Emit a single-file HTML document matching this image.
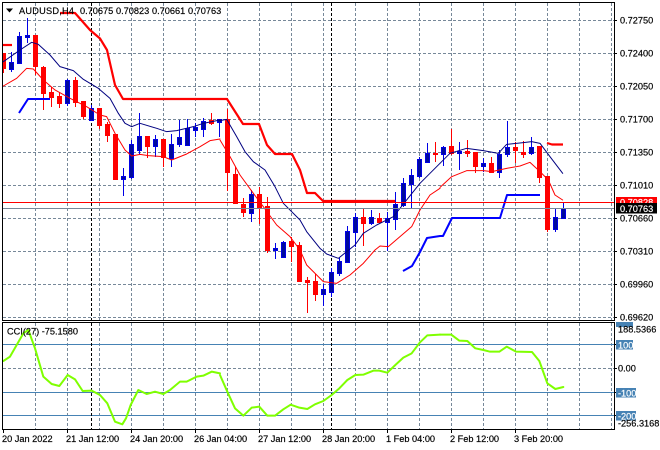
<!DOCTYPE html>
<html><head><meta charset="utf-8"><title>AUDUSD,H4</title>
<style>
html,body{margin:0;padding:0;background:#fff;width:660px;height:450px;overflow:hidden}
svg{display:block}
text{font-family:"Liberation Sans",sans-serif;font-size:9.2px;fill:#000;stroke:#000;stroke-width:.18}
text.w{fill:#fff;stroke:#fff}
.g{stroke:#778899;stroke-width:1;stroke-dasharray:3 2;fill:none;shape-rendering:crispEdges}
.k{stroke:#000;stroke-width:1;fill:none;shape-rendering:crispEdges}
.c{shape-rendering:crispEdges}
.z{fill:none;stroke-linejoin:round;stroke-linecap:round}
</style></head><body>
<svg width="660" height="450" viewBox="0 0 660 450" xmlns="http://www.w3.org/2000/svg">
<rect width="660" height="450" fill="#fff"/>
<!-- grid main -->
<path class="g" d="M3 20.5H614M3 53.5H614M3 86.5H614M3 119.5H614M3 152.5H614M3 185.5H614M3 218.5H614M3 251.5H614M3 284.5H614M3 317.5H614"/>
<path class="g" d="M35.5 3V320M67.5 3V320M99.5 3V320M131.5 3V320M163.5 3V320M195.5 3V320M227.5 3V320M259.5 3V320M291.5 3V320M323.5 3V320M355.5 3V320M387.5 3V320M419.5 3V320M451.5 3V320M483.5 3V320M515.5 3V320M547.5 3V320M579.5 3V320M611.5 3V320"/>
<!-- grid sub -->
<path class="g" d="M35.5 323V429M67.5 323V429M99.5 323V429M131.5 323V429M163.5 323V429M195.5 323V429M227.5 323V429M259.5 323V429M291.5 323V429M323.5 323V429M355.5 323V429M387.5 323V429M419.5 323V429M451.5 323V429M483.5 323V429M515.5 323V429M547.5 323V429M579.5 323V429M611.5 323V429M3 368.5H614"/>
<path d="M3 344.5H614M3 392.5H614M3 415.5H614" stroke="#4682b4" stroke-width="1" class="c"/>
<!-- period separators -->
<path d="M91.5 3V429M331.5 3V429" stroke="#000" stroke-width="1" stroke-dasharray="3 2" class="c"/>
<!-- wicks -->
<path class="c" stroke="#ff0000" stroke-width="1" fill="none" d="M3.5 53V73M35.5 35V75M43.5 66V110M51.5 87V107M59.5 92V108M75.5 77V107M83.5 101V119M99.5 108V129M107.5 122V142M115.5 134V179M147.5 136V158M163.5 139V167M211.5 113V125M227.5 109V191M235.5 167V204M243.5 198V217M259.5 187V224M267.5 197V253M291.5 237V262M299.5 242V282M307.5 277V313M315.5 274V301M363.5 208V246M379.5 213V223M435.5 142V162M451.5 129V155M467.5 140V157M475.5 152V173M491.5 157V173M515.5 142V163M523.5 141V158M539.5 146V183M547.5 176V232"/>
<path class="c" stroke="#0000e6" stroke-width="1" fill="none" d="M11.5 52V72M19.5 32V63M27.5 18V43M67.5 79V106M91.5 105V120M123.5 168V196M131.5 140V179M139.5 113V155M155.5 135V157M171.5 134V167M179.5 120V147M187.5 119V146M195.5 123V137M203.5 118V137M219.5 119V137M251.5 190V222M275.5 243V259M283.5 241V257M323.5 284V306M331.5 268V297M339.5 258V276M347.5 226V263M355.5 213V247M371.5 210V225M387.5 212V251M395.5 192V230M403.5 178V207M411.5 169V208M419.5 157V178M427.5 143V163M443.5 146V166M459.5 142V170M483.5 158V172M499.5 150V178M507.5 121V157M531.5 137V155M555.5 208V232M563.5 203V218"/>
<!-- red bodies -->
<path class="c" fill="#ff0000" d="M3 53h3v16h-3zM33 35h5v32h-5zM41 67h5v27h-5zM49 92h5v6h-5zM57 96h5v8h-5zM73 80h5v23h-5zM81 101h5v16h-5zM97 108h5v18h-5zM105 124h5v12h-5zM113 134h5v46h-5zM145 136h5v11h-5zM161 139h5v19h-5zM209 120h5v4h-5zM225 119h5v54h-5zM233 174h5v30h-5zM241 204h5v9h-5zM257 194h5v14h-5zM265 206h5v45h-5zM289 241h5v6h-5zM297 245h5v37h-5zM305 280h5v3h-5zM313 281h5v14h-5zM361 217h5v7h-5zM377 218h5v5h-5zM433 153h5v2h-5zM449 146h5v8h-5zM465 151h5v3h-5zM473 152h5v15h-5zM489 163h5v10h-5zM513 147h5v4h-5zM521 152h5v3h-5zM537 146h5v32h-5zM545 176h5v54h-5z"/>
<!-- blue bodies -->
<path class="c" fill="#000a9c" stroke="#0000e6" stroke-width="1" d="M9.5 62.5h4v7h-4zM17.5 36.5h4v27h-4zM25.5 35.5h4v2h-4zM65.5 80.5h4v23h-4zM89.5 108.5h4v12h-4zM121.5 176.5h4v3h-4zM129.5 144.5h4v33h-4zM137.5 136.5h4v14h-4zM153.5 139.5h4v7h-4zM169.5 144.5h4v14h-4zM177.5 137.5h4v7h-4zM185.5 128.5h4v17h-4zM193.5 127.5h4v3h-4zM201.5 121.5h4v8h-4zM217.5 119.5h4v3h-4zM249.5 194.5h4v19h-4zM273.5 248.5h4v2h-4zM281.5 242.5h4v15h-4zM321.5 289.5h4v5h-4zM329.5 272.5h4v20h-4zM337.5 261.5h4v12h-4zM345.5 231.5h4v31h-4zM353.5 217.5h4v15h-4zM369.5 217.5h4v6h-4zM385.5 218.5h4v4h-4zM393.5 204.5h4v15h-4zM401.5 183.5h4v22h-4zM409.5 175.5h4v9h-4zM417.5 159.5h4v17h-4zM425.5 153.5h4v9h-4zM441.5 147.5h4v7h-4zM457.5 151.5h4v2h-4zM481.5 163.5h4v3h-4zM497.5 154.5h4v18h-4zM505.5 147.5h4v7h-4zM529.5 147.5h4v6h-4zM553.5 217.5h4v12h-4zM561.5 208.5h4v10h-4z"/>
<!-- thin navy MA -->
<g class="z" stroke="#000080" stroke-width="3">
<polyline transform="scale(.33333)" points="10,185 60,150 95,127 115,133 150,165 180,200 220,212 250,238 295,265 330,295 355,340 375,370 395,380 420,370 470,385 500,395 530,392 580,380 610,370 660,360"/>
<polyline transform="translate(220 100) scale(.33333)" points="0,62 20,58 50,110 75,155 100,185 135,210 165,260 190,310 240,360 260,395 300,445 320,462 355,475 405,435 430,400 470,375 520,350 560,300 600,250 660,190"/>
<polyline transform="translate(440 100) scale(.33333)" points="0,190 30,160 80,145 130,152 175,160 200,133 250,128 275,125 300,130 330,170 368,220"/>
</g>
<!-- thin red MA -->
<g class="z" stroke="#ff0000" stroke-width="3">
<polyline transform="scale(.33333)" points="10,258 50,235 80,205 100,207 130,240 165,270 210,295 260,320 300,345 320,350 345,400 375,450 395,468 420,463 445,467 490,470 515,480 560,462 600,440 630,422 660,417"/>
<polyline transform="translate(220 100) scale(.33333)" points="0,120 30,170 60,225 100,280 130,320 170,375 210,410 240,450 260,495 310,545 350,550 390,525 430,490 465,450 480,438 505,440 540,410 575,380 600,330 630,285 660,265"/>
<polyline transform="translate(440 100) scale(.33333)" points="0,262 35,230 80,212 130,212 155,215 200,205 240,198 270,187 300,215 325,240 345,285 368,300"/>
</g>
<!-- thick red -->
<g fill="none" stroke="#ff0000" stroke-width="2.2" stroke-linejoin="round">
<path d="M3 45H12"/>
<path d="M60 13H75L90 30L100 38.5L107 50L115 85L123 99H227L243 124H259L267 145L275 154H292L300 170L307 193H315L323 201H395"/>
<path d="M547 143L552 144.5H563"/>
</g>
<!-- thick blue -->
<g fill="none" stroke="#0000ff" stroke-width="2" stroke-linejoin="round">
<path d="M19 113L28 99H50"/>
<path d="M403 271L412 266L420 252L427 238L440 236H443L452 218H500L507 195H540"/>
</g>
<!-- price lines -->
<path d="M3 202.5H614" stroke="#ff0000" stroke-width="1" class="c"/>
<path d="M3 208.5H614" stroke="#778899" stroke-width="1" class="c"/>
<!-- CCI -->
<g class="z" stroke="#7fff00" stroke-width="6">
<polyline transform="translate(0 310) scale(.33333)" points="10,153 30,140 50,105 70,70 85,60 105,115 130,200 155,222 178,228 203,195 225,208 248,243 275,242 300,255 322,280 345,335 367,343 378,325 392,285 415,240 440,252 465,245 490,252 510,240 540,215 560,215 590,200 610,197 635,185 660,190"/>
<polyline transform="translate(220 310) scale(.33333)" points="0,195 22,245 45,295 70,317 95,293 118,290 142,317 165,317 190,298 212,284 238,293 262,297 285,283 310,273 335,255 358,235 382,210 406,195 430,194 460,182 478,182 502,188 526,165 550,143 575,130 600,97 622,76 660,74"/>
<polyline transform="translate(440 310) scale(.33333)" points="0,74 34,74 58,92 82,93 106,115 130,120 150,125 178,125 200,110 228,125 276,126 298,153 322,220 346,237 370,231"/>
</g>
<!-- frames -->
<path class="k" d="M2.5 2.5H614.5V320.5H2.5ZM2.5 322.5H614.5V429.5H2.5Z"/>
<path class="k" d="M614 20.5h3M614 53.5h3M614 86.5h3M614 119.5h3M614 152.5h3M614 185.5h3M614 218.5h3M614 251.5h3M614 284.5h3M614 317.5h3M614 344.5h3M614 368.5h3M614 392.5h3M614 415.5h3M3.5 429v4M67.5 429v4M131.5 429v4M195.5 429v4M259.5 429v4M323.5 429v4M387.5 429v4M451.5 429v4M515.5 429v4"/>
<!-- header -->
<path d="M6 8.5h7l-3.5 4z" fill="#000"/>
<text x="19" y="14" textLength="55">AUDUSD,H4</text>
<text x="80" y="14">0.70675</text>
<text x="116" y="14">0.70823</text>
<text x="152" y="14">0.70661</text>
<text x="188" y="14">0.70763</text>
<!-- y axis -->
<text x="620" y="23.5">0.72750</text>
<text x="620" y="56.5">0.72400</text>
<text x="620" y="89.5">0.72050</text>
<text x="620" y="122.5">0.71700</text>
<text x="620" y="155.5">0.71350</text>
<text x="620" y="188.5">0.71010</text>
<text x="620" y="221.5">0.70660</text>
<text x="620" y="254.5">0.70310</text>
<text x="620" y="287.5">0.69960</text>
<text x="620" y="320.5">0.69620</text>
<!-- price labels -->
<rect x="616" y="197" width="41" height="7" fill="#ff0000"/>
<text class="w" x="620" y="205.5">0.70828</text>
<rect x="616" y="203" width="41" height="10.5" fill="#000"/>
<text class="w" x="620" y="212">0.70763</text>
<!-- CCI labels -->
<text x="7" y="334.5">CCI(27) -75.1580</text>
<rect x="616" y="322" width="17" height="5" fill="#4682b4"/>
<text x="618" y="332.5">188.5366</text>
<rect x="616" y="340" width="17" height="9.5" fill="#4682b4"/>
<text class="w" x="618" y="348.5">100</text>
<text x="618" y="371.5">0.00</text>
<rect x="616" y="388" width="20" height="9.5" fill="#4682b4"/>
<text class="w" x="618" y="396.5">-100</text>
<rect x="616" y="411" width="20" height="9.5" fill="#4682b4"/>
<text class="w" x="618" y="419.5">-200</text>
<text x="618" y="426.5">-256.3168</text>
<!-- x axis -->
<text x="2" y="442">20 Jan 2022</text>
<text x="66" y="442">21 Jan 12:00</text>
<text x="130" y="442">24 Jan 20:00</text>
<text x="194" y="442">26 Jan 04:00</text>
<text x="258" y="442">27 Jan 12:00</text>
<text x="322" y="442">28 Jan 20:00</text>
<text x="386" y="442">1 Feb 04:00</text>
<text x="450" y="442">2 Feb 12:00</text>
<text x="514" y="442">3 Feb 20:00</text>
</svg>
</body></html>
